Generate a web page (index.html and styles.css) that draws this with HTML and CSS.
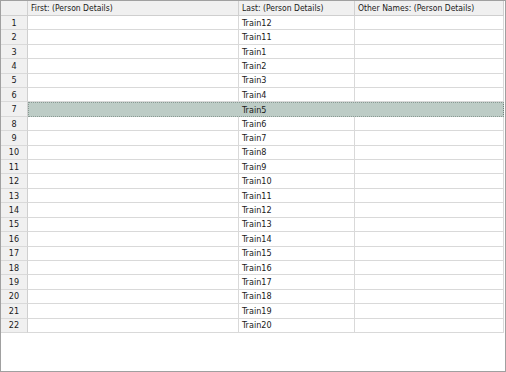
FILE: index.html
```html
<!DOCTYPE html>
<html>
<head>
<meta charset="utf-8">
<link rel="stylesheet" href="styles.css">
</head>
<body>
<div class="frame">
  <div class="grid">
    <div class="hc corner"></div>
    <div class="hc">First: (Person Details)</div>
    <div class="hc">Last: (Person Details)</div>
    <div class="hc">Other Names: (Person Details)</div>

    <div class="rn">1</div><div class="c"></div><div class="c">Train12</div><div class="c"></div>
    <div class="rn">2</div><div class="c"></div><div class="c">Train11</div><div class="c"></div>
    <div class="rn">3</div><div class="c"></div><div class="c">Train1</div><div class="c"></div>
    <div class="rn">4</div><div class="c"></div><div class="c">Train2</div><div class="c"></div>
    <div class="rn">5</div><div class="c"></div><div class="c">Train3</div><div class="c"></div>
    <div class="rn">6</div><div class="c"></div><div class="c">Train4</div><div class="c"></div>
    <div class="rn">7</div><div class="sel"><span class="sel-first"></span><span class="sel-last">Train5</span></div>
    <div class="rn">8</div><div class="c"></div><div class="c">Train6</div><div class="c"></div>
    <div class="rn">9</div><div class="c"></div><div class="c">Train7</div><div class="c"></div>
    <div class="rn">10</div><div class="c"></div><div class="c">Train8</div><div class="c"></div>
    <div class="rn">11</div><div class="c"></div><div class="c">Train9</div><div class="c"></div>
    <div class="rn">12</div><div class="c"></div><div class="c">Train10</div><div class="c"></div>
    <div class="rn">13</div><div class="c"></div><div class="c">Train11</div><div class="c"></div>
    <div class="rn">14</div><div class="c"></div><div class="c">Train12</div><div class="c"></div>
    <div class="rn">15</div><div class="c"></div><div class="c">Train13</div><div class="c"></div>
    <div class="rn">16</div><div class="c"></div><div class="c">Train14</div><div class="c"></div>
    <div class="rn">17</div><div class="c"></div><div class="c">Train15</div><div class="c"></div>
    <div class="rn">18</div><div class="c"></div><div class="c">Train16</div><div class="c"></div>
    <div class="rn">19</div><div class="c"></div><div class="c">Train17</div><div class="c"></div>
    <div class="rn">20</div><div class="c"></div><div class="c">Train18</div><div class="c"></div>
    <div class="rn">21</div><div class="c"></div><div class="c">Train19</div><div class="c"></div>
    <div class="rn">22</div><div class="c"></div><div class="c">Train20</div><div class="c"></div>
  </div>
</div>
</body>
</html>
```
FILE: styles.css
```css
html, body {
  margin: 0;
  padding: 0;
  background: #ffffff;
}
.frame {
  width: 506px;
  height: 372px;
  box-sizing: border-box;
  border: 1px solid #a0a0a0;
  background: #ffffff;
  font-family: "DejaVu Sans Condensed", "DejaVu Sans", sans-serif;
  font-size: 9px;
  color: #1a1a1a;
}
.grid {
  display: grid;
  grid-template-columns: 27px 211px 116px 149px;
  grid-template-rows: 15px repeat(22, 14.41px);
  width: 503px;
}
.hc, .rn, .c {
  box-sizing: border-box;
  border-right: 1px solid #d9d9d9;
  border-bottom: 1px solid #d9d9d9;
  display: flex;
  align-items: center;
  overflow: hidden;
  white-space: nowrap;
}
.hc {
  background: #f0f0f0;
  padding-left: 3px;
  font-size: 8.5px;
  border-right-color: #d0d0d0;
  border-bottom-color: #cfcfcf;
}
.corner {
  padding: 0;
}
.rn {
  background: #f0f0f0;
  justify-content: center;
  border-right-color: #cfcfcf;
}
.c {
  padding-left: 3px;
  background: #ffffff;
}
.sel {
  grid-column: 2 / 5;
  display: grid;
  grid-template-columns: 210px 116px 1fr;
  box-sizing: border-box;
  background: #bdccc6;
  border: 1px dotted #8a9a94;
  border-right-color: #6f7f79;
  align-items: center;
  white-space: nowrap;
}
.sel-first {
  display: block;
}
.sel-last {
  padding-left: 3px;
}
```
